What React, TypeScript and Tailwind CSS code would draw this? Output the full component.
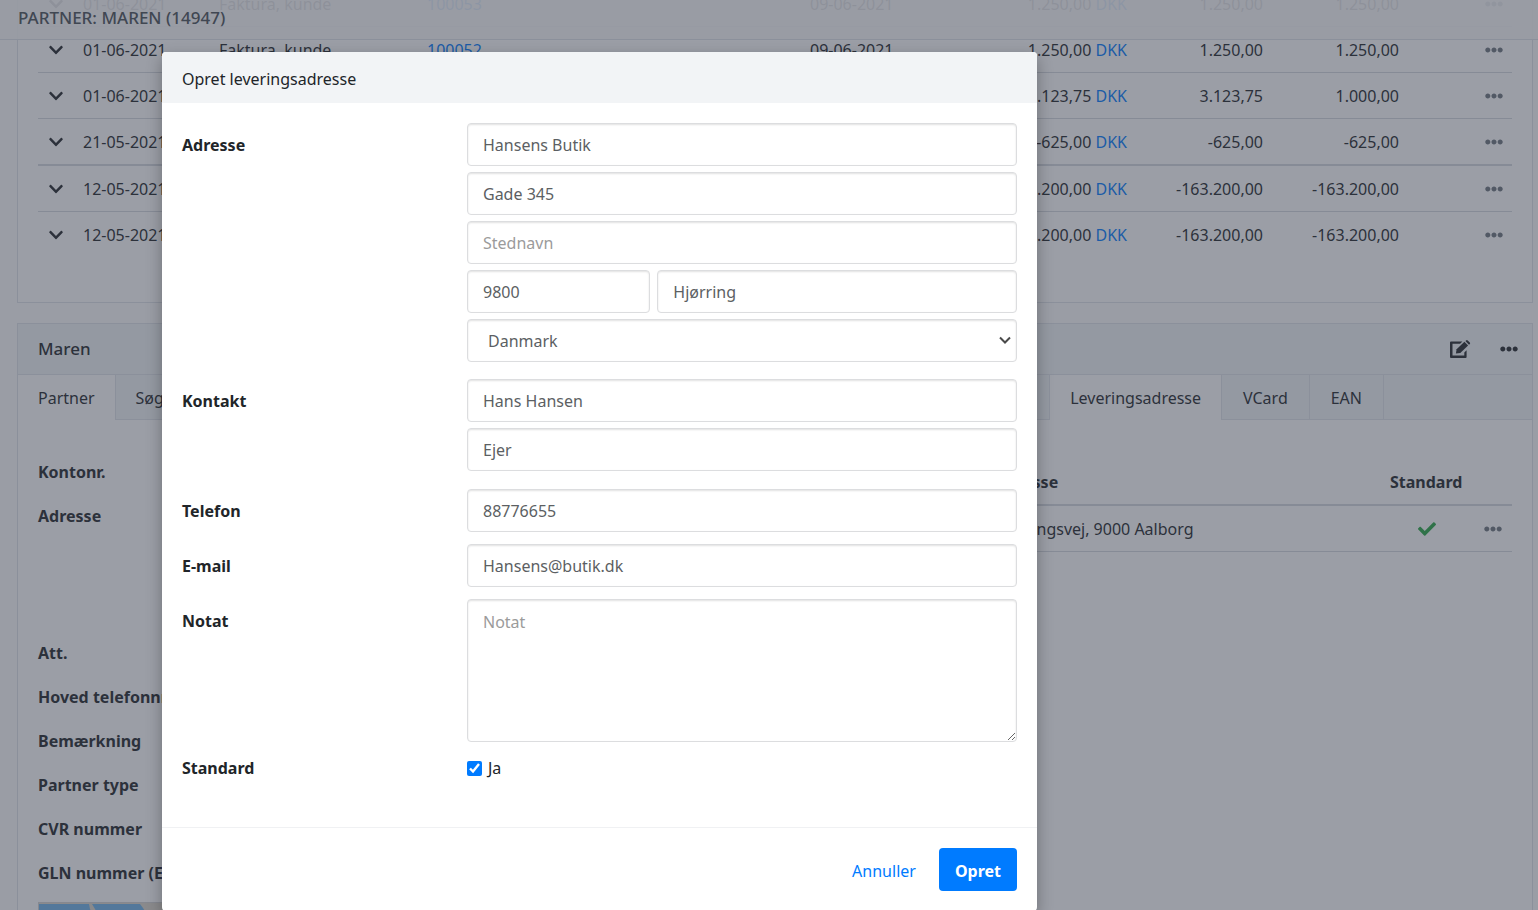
import { useState } from "react";
import { FaCheck, FaChevronDown, FaEllipsisH } from "react-icons/fa";

type Posting = {
  date: string;
  type: string;
  voucher: string;
  due: string;
  amount: string;
  local: string;
  rest: string;
  groupEnd?: boolean;
};

const postings: Posting[] = [
  { date: "01-06-2021", type: "Faktura, kunde", voucher: "100053", due: "09-06-2021", amount: "1.250,00", local: "1.250,00", rest: "1.250,00" },
  { date: "01-06-2021", type: "Faktura, kunde", voucher: "100052", due: "09-06-2021", amount: "1.250,00", local: "1.250,00", rest: "1.250,00" },
  { date: "01-06-2021", type: "Faktura, kunde", voucher: "100051", due: "09-06-2021", amount: "3.123,75", local: "3.123,75", rest: "1.000,00" },
  { date: "21-05-2021", type: "Kreditnota", voucher: "100050", due: "", amount: "-625,00", local: "-625,00", rest: "-625,00", groupEnd: true },
  { date: "12-05-2021", type: "Betaling", voucher: "100049", due: "", amount: "-163.200,00", local: "-163.200,00", rest: "-163.200,00" },
  { date: "12-05-2021", type: "Betaling", voucher: "100048", due: "", amount: "-163.200,00", local: "-163.200,00", rest: "-163.200,00" },
];

const partnerFields = ["Att.", "Hoved telefonnr.", "Bemærkning", "Partner type", "CVR nummer", "GLN nummer (EAN)"];

const control =
  "h-[43px] w-full rounded border border-[#dcdddf] bg-white px-[15px] pt-px text-[#5c5f63] shadow-[inset_0_1px_2px_rgba(0,0,0,0.12)] outline-none placeholder:text-[#9b9b9b]";

function EditIcon() {
  return (
    <svg className="h-[18px] w-[21px]" viewBox="0 0 21 18" fill="currentColor" aria-hidden="true">
      <path d="M1 1.4h11.4l-2.3 2.3H2.5v11.8h11.8v-3l2.3-2.3V17a1 1 0 0 1-1 1H1a1 1 0 0 1-1-1V2.4a1 1 0 0 1 1-1z" />
      <path d="M5.9 13.5l.7-4.3 7.8-7.4 3.7 3.6-7.8 7.5z" />
      <path d="M15.4 1 16.1.4q.8-.7 1.6 0l2.1 2.1q.7.8 0 1.5l-.8.8z" />
    </svg>
  );
}

function MoreButton({ label, className }: { label: string; className: string }) {
  return (
    <button type="button" aria-label={label} className={`block ${className}`}>
      <FaEllipsisH className="size-[18px]" />
    </button>
  );
}

function PostingTable() {
  return (
    <section className="border border-[#dfe3e8] bg-white px-5 pb-[45px]">
      <table className="w-full table-fixed">
        <colgroup>
          <col className="w-[45px]" />
          <col className="w-[136px]" />
          <col className="w-[208px]" />
          <col />
          <col className="w-[180px]" />
          <col className="w-[137px]" />
          <col className="w-[136px]" />
          <col className="w-[136px]" />
          <col className="w-[113px]" />
        </colgroup>
        <tbody>
          {postings.map((row, index) => (
            <tr
              key={row.voucher}
              className={
                index === postings.length - 1
                  ? "h-[46px]"
                  : row.groupEnd
                    ? "h-[47px] border-b-2 border-[#d5d9de]"
                    : "h-[46px] border-b border-[#d5d9de]"
              }
            >
              <td className="pl-2.5 pt-0.5">
                <button type="button" aria-label="Vis detaljer" className="flex">
                  <FaChevronDown className="size-4" />
                </button>
              </td>
              <td className="pt-0.5">{row.date}</td>
              <td className="pt-0.5">{row.type}</td>
              <td className="pt-0.5">
                <a href="#" className="text-[#007bff]">{row.voucher}</a>
              </td>
              <td className="pt-0.5">{row.due}</td>
              <td className="whitespace-nowrap pt-0.5 text-right">
                {row.amount} <a href="#" className="text-[#007bff]">DKK</a>
              </td>
              <td className="pt-0.5 text-right">{row.local}</td>
              <td className="pt-0.5 text-right">{row.rest}</td>
              <td className="pr-[9px] pt-0.5">
                <MoreButton label="Flere handlinger" className="ml-auto text-[#6c757d]" />
              </td>
            </tr>
          ))}
        </tbody>
      </table>
    </section>
  );
}

function MapPreview() {
  return (
    <svg className="h-40 w-full border border-[#d3d3d3]" aria-hidden="true">
      <rect width="100%" height="100%" fill="#dcd6ca" />
      <path d="M0 1h50l1 5 3 6v148H0z" fill="#6fb3e8" />
      <path d="M53 1h48l3 4 4 7 10 148H60l-1-148-3-6z" fill="#6fb3e8" />
    </svg>
  );
}

function PartnerCard() {
  const tab = "h-[45px] border-r border-b border-[#dfe3e8] pt-0.5";
  const activeTab = "h-[45px] border-r border-[#dfe3e8] bg-white px-5 pt-px";
  return (
    <section className="border border-[#dfe3e8] bg-white">
      <header className="flex h-[51px] items-center justify-between border-b border-[#dfe3e8] bg-[#f0f4f7] pl-5 pr-3.5">
        <h2 className="text-[17px] font-medium">Maren</h2>
        <div className="flex items-center gap-[29px]">
          <button type="button" aria-label="Rediger">
            <EditIcon />
          </button>
          <MoreButton label="Flere handlinger" className="" />
        </div>
      </header>
      <nav className="flex bg-[#f0f4f7]">
        <button type="button" className={activeTab}>Partner</button>
        <button type="button" className={`${tab} px-5`}>Søgenavne</button>
        <div className="flex-1 border-r border-b border-[#dfe3e8]" />
        <button type="button" className={activeTab}>Leveringsadresse</button>
        <button type="button" className={`${tab} px-[21px]`}>VCard</button>
        <button type="button" className={`${tab} px-[21px]`}>EAN</button>
        <div className="w-[148px] border-b border-[#dfe3e8]" />
      </nav>
      <div className="flex">
        <div className="w-1/2 px-5 pt-[30px] font-bold">
          <p className="flex h-11 items-center">Kontonr.</p>
          <p className="h-[137px] pt-2.5">Adresse</p>
          {partnerFields.map((field) => (
            <p key={field} className="flex h-11 items-center">{field}</p>
          ))}
          <div className="pt-[7px]">
            <MapPreview />
          </div>
        </div>
        <div className="flex-1 px-5 pt-[38px]">
          <table className="w-full table-fixed">
            <colgroup>
              <col />
              <col className="w-[395px]" />
              <col className="w-[74px]" />
              <col className="w-[48px]" />
            </colgroup>
            <thead>
              <tr className="h-[47px] border-b-2 border-[#d5d9de] text-left">
                <th className="pt-0.5">Navn</th>
                <th className="pt-0.5">Adresse</th>
                <th className="pt-0.5">Standard</th>
                <th />
              </tr>
            </thead>
            <tbody>
              <tr className="h-[46px] border-b border-[#d5d9de]">
                <td className="pt-0.5">Maren</td>
                <td className="pt-0.5">Herningsvej, 9000 Aalborg</td>
                <td className="pt-0.5">
                  <FaCheck className="mx-auto size-[18px] text-[#28a745]" />
                </td>
                <td className="pr-2.5 pt-0.5">
                  <MoreButton label="Flere handlinger" className="ml-auto text-[#6c757d]" />
                </td>
              </tr>
            </tbody>
          </table>
        </div>
      </div>
    </section>
  );
}

function DeliveryAddressDialog() {
  const [isDefault, setIsDefault] = useState(true);
  const row = "grid grid-cols-[285px_1fr]";
  const label = "h-[43px] leading-[45px] font-bold";

  return (
    <form
      role="dialog"
      aria-labelledby="dialog-title"
      onSubmit={(event) => event.preventDefault()}
      className="w-full max-w-[875px] overflow-hidden rounded bg-white shadow-[0_6px_16px_rgba(0,0,0,0.3)]"
    >
      <h1 id="dialog-title" className="flex h-[51px] items-center bg-[#f2f4f6] px-5 pt-0.5">
        Opret leveringsadresse
      </h1>
      <div className="px-5 pt-5">
        <div className={`${row} mb-[17px]`}>
          <label htmlFor="name" className={label}>Adresse</label>
          <div className="grid gap-1.5">
            <input id="name" className={control} defaultValue="Hansens Butik" />
            <input aria-label="Vejnavn" className={control} defaultValue="Gade 345" />
            <input aria-label="Stednavn" className={control} placeholder="Stednavn" />
            <div className="flex gap-[7px]">
              <div className="w-1/3 shrink-0">
                <input aria-label="Postnr." className={control} defaultValue="9800" />
              </div>
              <input aria-label="By" className={control} defaultValue="Hjørring" />
            </div>
            <div className="relative">
              <select aria-label="Land" className={`${control} appearance-none indent-[5px]`} defaultValue="DK">
                <option value="DK">Danmark</option>
              </select>
              <svg
                className="pointer-events-none absolute right-1.5 top-[17px] h-2 w-3 text-[#4a4a4a]"
                viewBox="0 0 12 8"
                fill="none"
                stroke="currentColor"
                strokeWidth="2"
                aria-hidden="true"
              >
                <path d="M1 1.5l5 5 5-5" />
              </svg>
            </div>
          </div>
        </div>
        <div className={`${row} mb-[18px]`}>
          <label htmlFor="contact" className={label}>Kontakt</label>
          <div className="grid gap-1.5">
            <input id="contact" className={control} defaultValue="Hans Hansen" />
            <input aria-label="Titel" className={control} defaultValue="Ejer" />
          </div>
        </div>
        <div className={`${row} mb-3`}>
          <label htmlFor="phone" className={label}>Telefon</label>
          <input id="phone" className={control} defaultValue="88776655" />
        </div>
        <div className={`${row} mb-3`}>
          <label htmlFor="email" className={label}>E-mail</label>
          <input id="email" className={control} defaultValue="Hansens@butik.dk" />
        </div>
        <div className={row}>
          <label htmlFor="note" className={label}>Notat</label>
          <textarea
            id="note"
            placeholder="Notat"
            className="block h-[143px] w-full rounded border border-[#dcdddf] bg-white px-[15px] py-2.5 text-[#5c5f63] shadow-[inset_0_1px_2px_rgba(0,0,0,0.12)] outline-none placeholder:text-[#9b9b9b]"
          />
        </div>
        <div className={`${row} h-[85px] pt-3.5`}>
          <span className="font-bold">Standard</span>
          <label className="flex h-6 items-center gap-1.5">
            <input
              type="checkbox"
              checked={isDefault}
              onChange={(event) => setIsDefault(event.target.checked)}
              className="size-[15px] accent-[#007bff]"
            />
            Ja
          </label>
        </div>
      </div>
      <footer className="flex items-center justify-end gap-[7px] border-t border-[#f0f1f3] px-5 py-5">
        <button type="button" className="h-[43px] px-4 pt-0.5 text-[#007bff]">Annuller</button>
        <button type="submit" className="h-[43px] rounded bg-[#007bff] px-4 pt-0.5 font-bold text-white">Opret</button>
      </footer>
    </form>
  );
}

export default function App() {
  return (
    <div className="relative h-screen overflow-hidden bg-[#fcfcfd] font-['Noto_Sans','Open_Sans',sans-serif] text-base leading-6 text-[#212529]">
      <header className="absolute inset-x-0 top-0 z-10 flex h-10 items-center border-b border-[#dfe3e8] bg-[#f9fafb]/90 px-[18px] pb-1 text-[17px] font-medium text-[#495057]">
        PARTNER: MAREN (14947)
      </header>
      <main className="-mt-[21px] flex flex-col gap-5 pl-[17px] pr-[5px]">
        <PostingTable />
        <PartnerCard />
      </main>
      <div className="absolute inset-0 z-20 flex items-start bg-[#383e4e]/50 pl-[162px] pt-[52px]">
        <DeliveryAddressDialog />
      </div>
    </div>
  );
}
